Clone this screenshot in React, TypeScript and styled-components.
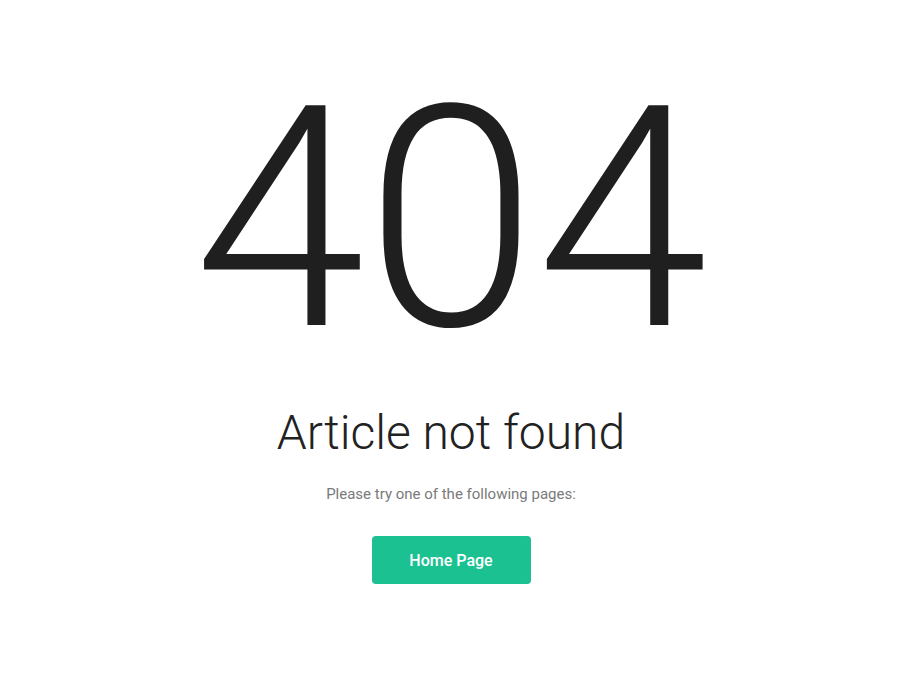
import React from "react";
import styled, { createGlobalStyle } from "styled-components";

const Global = createGlobalStyle`
  html, body { margin: 0; padding: 0; background: #ffffff; }
  body { font-family: Roboto, "Liberation Sans", sans-serif; }
`;

const Page = styled.main`
  display: flex;
  flex-direction: column;
  align-items: center;
  padding-top: 54px;
  text-align: center;
`;

const Code = styled.h1`
  margin: 0;
  font-family: Roboto, sans-serif;
  font-weight: 300;
  font-size: 309px;
  line-height: 330px;
  color: #1f1f1f;
`;

const Title = styled.h2`
  margin: 19px 0 0;
  font-family: Roboto, sans-serif;
  font-weight: 300;
  font-size: 48px;
  line-height: 60px;
  color: #222;
`;

const Hint = styled.p`
  margin: 21px 0 0;
  font-family: Roboto, sans-serif;
  font-size: 15px;
  line-height: 20px;
  color: #7a7a7a;
`;

const Button = styled.a`
  margin-top: 32px;
  display: inline-flex;
  align-items: center;
  justify-content: center;
  width: 159px;
  height: 48px;
  border-radius: 4px;
  background: #1bc190;
  color: #fff;
  font-family: Roboto, sans-serif;
  font-weight: 500;
  font-size: 16px;
  text-decoration: none;
`;

export default function App() {
  return (
    <>
      <Global />
      <Page>
        <Code>404</Code>
        <Title>Article not found</Title>
        <Hint>Please try one of the following pages:</Hint>
        <Button href="#">Home Page</Button>
      </Page>
    </>
  );
}
